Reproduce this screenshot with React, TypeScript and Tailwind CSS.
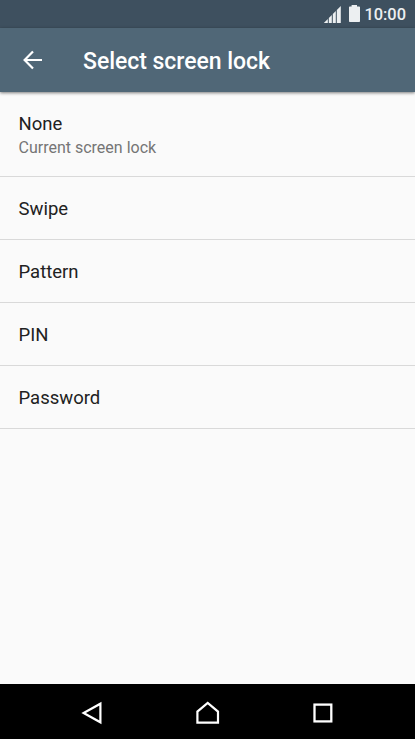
import React from "react";

const options = [
    { title: "None", summary: "Current screen lock" },
    { title: "Swipe" },
    { title: "Pattern" },
    { title: "PIN" },
    { title: "Password" },
];

const StatusBar = () => (
    <div className="flex h-7 shrink-0 items-center justify-end bg-[#3e505f] pr-[9px] text-[#eceff1]">
        <svg width="18" height="18" viewBox="0 0 18 18" fill="currentColor" className="mr-[7px]">
            <path d="M0.8 18 4.8 14V18Z" />
            <path d="M5.8 13 8.8 10V18H5.8Z" />
            <path d="M9.8 9 12.8 6V18H9.8Z" />
            <path d="M13.8 5 17.8 1V18H13.8Z" />
        </svg>
        <svg width="12" height="18" viewBox="0 0 12 18" fill="currentColor" className="mr-1">
            <path d="M3.6 0H9V1.5H11.2Q12 1.5 12 2.3V16.2Q12 17 11.2 17H1.8Q1 17 1 16.2V2.3Q1 1.5 1.8 1.5H3.6Z" />
        </svg>
        <span className="pt-0.5 text-[16.4px] leading-7 font-medium">10:00</span>
    </div>
);

const AppBar = () => (
    <header className="relative flex h-16 shrink-0 items-center bg-[#506777] pl-[23px] text-white shadow-[0_1px_3px_rgba(0,0,0,0.5)]">
        <button type="button" aria-label="Back">
            <svg width="20" height="20" viewBox="0 0 20 20" fill="none" stroke="currentColor" strokeWidth="2.2">
                <path d="M19 10H2M10 1.4 1.6 10 10 18.6" />
            </svg>
        </button>
        <h1 className="ml-10 pt-1 text-[23px] leading-7 font-medium tracking-[-0.04px]">Select screen lock</h1>
    </header>
);

const NavigationBar = () => (
    <nav className="flex h-[55px] shrink-0 items-center justify-between bg-black pt-[3px] pr-[81px] pl-[81px] text-white">
        <button type="button" aria-label="Back">
            <svg width="22" height="24" viewBox="0 0 22 24" fill="none" stroke="currentColor" strokeWidth="2.2">
                <path d="M19.4 2.7V21.3L2.6 12Z" />
            </svg>
        </button>
        <button type="button" aria-label="Home">
            <svg width="24" height="24" viewBox="0 0 24 24" fill="none" stroke="currentColor" strokeWidth="2.2">
                <path d="M1.4 21.7V10.6L11.7 2 22 10.6V21.7Z" />
            </svg>
        </button>
        <button type="button" aria-label="Recent apps">
            <svg width="22" height="22" viewBox="0 0 22 22" fill="none" stroke="currentColor" strokeWidth="2.3">
                <rect x="2.5" y="2.6" width="16.8" height="16.8" />
            </svg>
        </button>
    </nav>
);

const App = () => {
    return (
        <div className="flex h-screen w-full flex-col overflow-hidden bg-[#fafafa] font-['Roboto',sans-serif]">
            <StatusBar />
            <AppBar />
            <ul className="flex-1">
                {options.map((option) => (
                    <li
                        key={option.title}
                        className={`flex flex-col justify-center border-b border-[#d9d9d9] pl-[18.5px] ${option.summary ? "h-[85px]" : "h-[63px]"}`}
                    >
                        <span className="pt-0.5 text-[18.5px] leading-6 text-[#212121]">{option.title}</span>
                        {option.summary && <span className="text-[16px] leading-[23px] text-[#757575]">{option.summary}</span>}
                    </li>
                ))}
            </ul>
            <NavigationBar />
        </div>
    );
};

export default App;
